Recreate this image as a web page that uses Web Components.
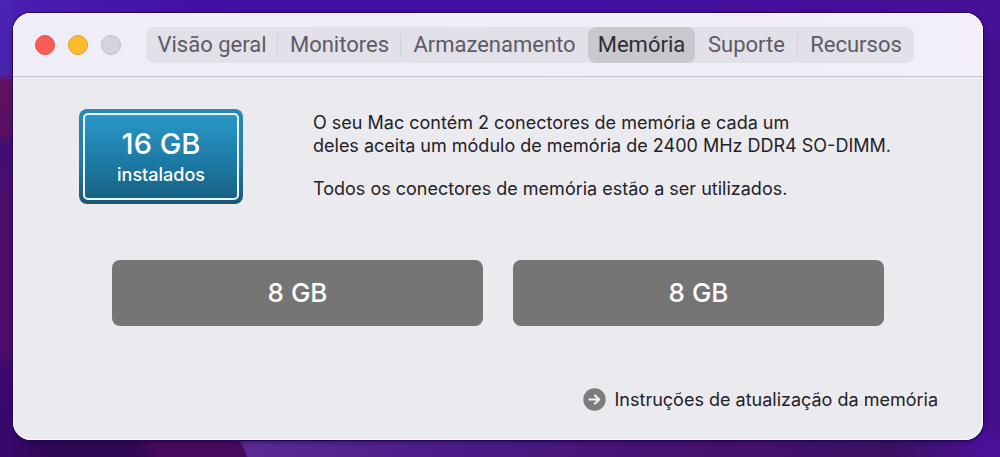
<!DOCTYPE html>
<html lang="pt">
<head>
<meta charset="utf-8">
<meta name="viewport" content="width=device-width, initial-scale=1">
<title>Memória</title>
<style>
html, body { margin: 0; min-height: 100%; }
body {
  font-family: Inter, "Liberation Sans", sans-serif;
  color: #232227;
}
</style>
</head>
<body>
<mac-desktop>
  <mac-window>
    <tab-bar slot="toolbar" selected="3" tabs="Visão geral|Monitores|Armazenamento|Memória|Suporte|Recursos"></tab-bar>
    <memory-summary>
      <memory-badge slot="badge" amount="16 GB">instalados</memory-badge>
      <span slot="title">O seu Mac contém 2 conectores de memória e cada um<br>deles aceita um módulo de memória de 2400 MHz DDR4 SO-DIMM.</span>
      <span slot="status">Todos os conectores de memória estão a ser utilizados.</span>
    </memory-summary>
    <memory-slots>
      <memory-slot>8 GB</memory-slot>
      <memory-slot>8 GB</memory-slot>
    </memory-slots>
    <help-link slot="footer">Instruções de atualização da memória</help-link>
  </mac-window>
</mac-desktop>

<script>
function define(name, markup, setup) {
  const template = document.createElement('template');
  template.innerHTML = markup;
  customElements.define(name, class extends HTMLElement {
    constructor() {
      super();
      this.attachShadow({ mode: 'open' }).append(template.content.cloneNode(true));
    }
    connectedCallback() {
      if (setup && !this.ready) setup(this, this.shadowRoot);
      this.ready = true;
    }
  });
}

define('mac-desktop', `
<style>
:host {
  display: grid;
  box-sizing: border-box;
  min-height: 100vh;
  padding: 13px 17px 17px 13px;
  background:
    linear-gradient(#4a22b4 0, #4823ac 74px, #60125e 82px, #5a0f61 130px, #400f72 145px, #4a0d6c 200px, #4d0c68 350px, #3a0870 375px, #39086c 440px, #39086c) left / 14px 100% no-repeat,
    linear-gradient(90deg, #4a1fb4, #420fa4 200px, #420fa2 60%, #460f94) top / 100% 40px no-repeat,
    linear-gradient(66deg, #39086c 0, #2f0752 60px, #2f0752 125px, #440a5c 145px, #440a5c 225px, #5b2a92 227px, #4c1a86 430px, #471170 620px, #3e1064 820px, #4b1096 900px) bottom / 100% 24px no-repeat,
    #450f8c;
}
</style>
<slot></slot>`);

define('mac-window', `
<style>
:host {
  display: flex;
  flex-direction: column;
  border-radius: 18px;
  overflow: hidden;
  background: #ebeaef;
  box-shadow: 0 0 0 1px #22045c, 0 2px 4px #1d043f90, inset 0 0 0 1px #fbf8ff;
}
header {
  display: flex;
  align-items: center;
  height: 63px;
  padding: 0 69px 0 22px;
  background: linear-gradient(90deg, #efedf7, #f3eefa);
  border-bottom: 1px solid #c9c5d3;
  box-shadow: inset 1px 1px #fcfaff, inset -1px 0 #fcfaff;
}
.lights { display: flex; gap: 13px; margin-right: 25px; }
.lights button {
  width: 20px;
  height: 20px;
  padding: 0;
  border: 1px solid #dd4e48;
  border-radius: 50%;
  background: #fd5b55;
}
.lights button:nth-child(2) { border-color: #dda02c; background: #fdbb2e; }
.lights button:nth-child(3) { border-color: #bebdc6; background: #d5d4dc; }
main { flex: 1; }
footer { display: flex; justify-content: flex-end; padding: 0 45px 28px; }
</style>
<header>
  <div class="lights">
    <button aria-label="Fechar"></button><button aria-label="Minimizar"></button><button aria-label="Zoom" disabled></button>
  </div>
  <slot name="toolbar"></slot>
</header>
<main><slot></slot></main>
<footer><slot name="footer"></slot></footer>`);

define('tab-bar', `
<style>
:host { display: block; flex: 1; }
nav {
  display: grid;
  grid-template-columns: 132fr 123fr 187fr 107fr 103fr 116fr;
  height: 36px;
  border-radius: 8px;
  background: #e2e0e9;
}
button {
  display: flex;
  align-items: center;
  justify-content: center;
  padding: 0;
  border: 0;
  border-radius: 8px;
  background: none;
  font: 22px/24px Roboto, "Liberation Sans", sans-serif;
  color: #5d5b65;
  white-space: nowrap;
}
button.ruled {
  background: linear-gradient(#d3d1da, #d3d1da) right / 1px 24px no-repeat;
  border-radius: 0;
}
button[aria-selected="true"] { background: #c9c8ce; color: #2f2e33; }
</style>
<nav role="tablist"></nav>`, (host, root) => {
  const selected = Number(host.getAttribute('selected'));
  const labels = host.getAttribute('tabs').split('|');
  labels.forEach((label, i) => {
    const button = document.createElement('button');
    button.textContent = label;
    button.setAttribute('role', 'tab');
    button.setAttribute('aria-selected', String(i === selected));
    if (i !== selected && i !== selected - 1 && i < labels.length - 1) button.className = 'ruled';
    root.querySelector('nav').append(button);
  });
});

define('memory-summary', `
<style>
:host { display: flex; align-items: flex-start; gap: 70px; padding: 32px 66px 0; }
.text { font-size: 18px; line-height: 23px; padding-top: 2px; white-space: nowrap; }
p { margin: 0 0 20px; }
p:last-child { margin: 0; }
</style>
<slot name="badge"></slot>
<div class="text"><p><slot name="title"></slot></p><p><slot name="status"></slot></p></div>`);

define('memory-badge', `
<style>
:host {
  display: block;
  flex: none;
  box-sizing: border-box;
  width: 164px;
  padding: 4px;
  border-radius: 8px;
  background: linear-gradient(#2b88b4, #267fa8 50%, #1c5673);
  color: #fff;
  text-align: center;
}
.frame {
  padding: 11px 0;
  border: 2px solid #e2f6fc;
  border-radius: 5px;
  background: linear-gradient(#2a97c6, #1d7ba6 55%, #186183);
}
strong { display: block; font-weight: 500; font-size: 29px; line-height: 36px; }
span { display: block; font-weight: 500; font-size: 18px; line-height: 25px; }
</style>
<div class="frame"><strong></strong><span><slot></slot></span></div>`, (host, root) => {
  root.querySelector('strong').textContent = host.getAttribute('amount');
});

define('memory-slots', `
<style>
:host { display: grid; grid-auto-flow: column; grid-auto-columns: 1fr; gap: 30px; padding: 56px 99px 0; }
</style>
<slot></slot>`);

define('memory-slot', `
<style>
:host {
  display: flex;
  align-items: center;
  justify-content: center;
  height: 66px;
  border-radius: 8px;
  background: #757576;
  color: #fff;
  font-size: 26px;
  line-height: 32px;
  font-weight: 500;
}
</style>
<slot></slot>`);

define('help-link', `
<style>
:host { display: block; }
a {
  display: flex;
  align-items: center;
  gap: 9px;
  color: inherit;
  text-decoration: none;
  font-size: 18px;
  line-height: 25px;
}
svg { display: block; }
</style>
<a href="#"><svg width="23" height="23" viewBox="0 0 23 23" aria-hidden="true">
<circle cx="11.5" cy="11.5" r="11.2" fill="#7d7d7f"/>
<path d="M6.3 11.5H16M12 7.4L16.2 11.5L12 15.6" fill="none" stroke="#f3f2f6" stroke-width="2.1" stroke-linecap="round" stroke-linejoin="round"/>
</svg><span><slot></slot></span></a>`);
</script>
</body>
</html>
